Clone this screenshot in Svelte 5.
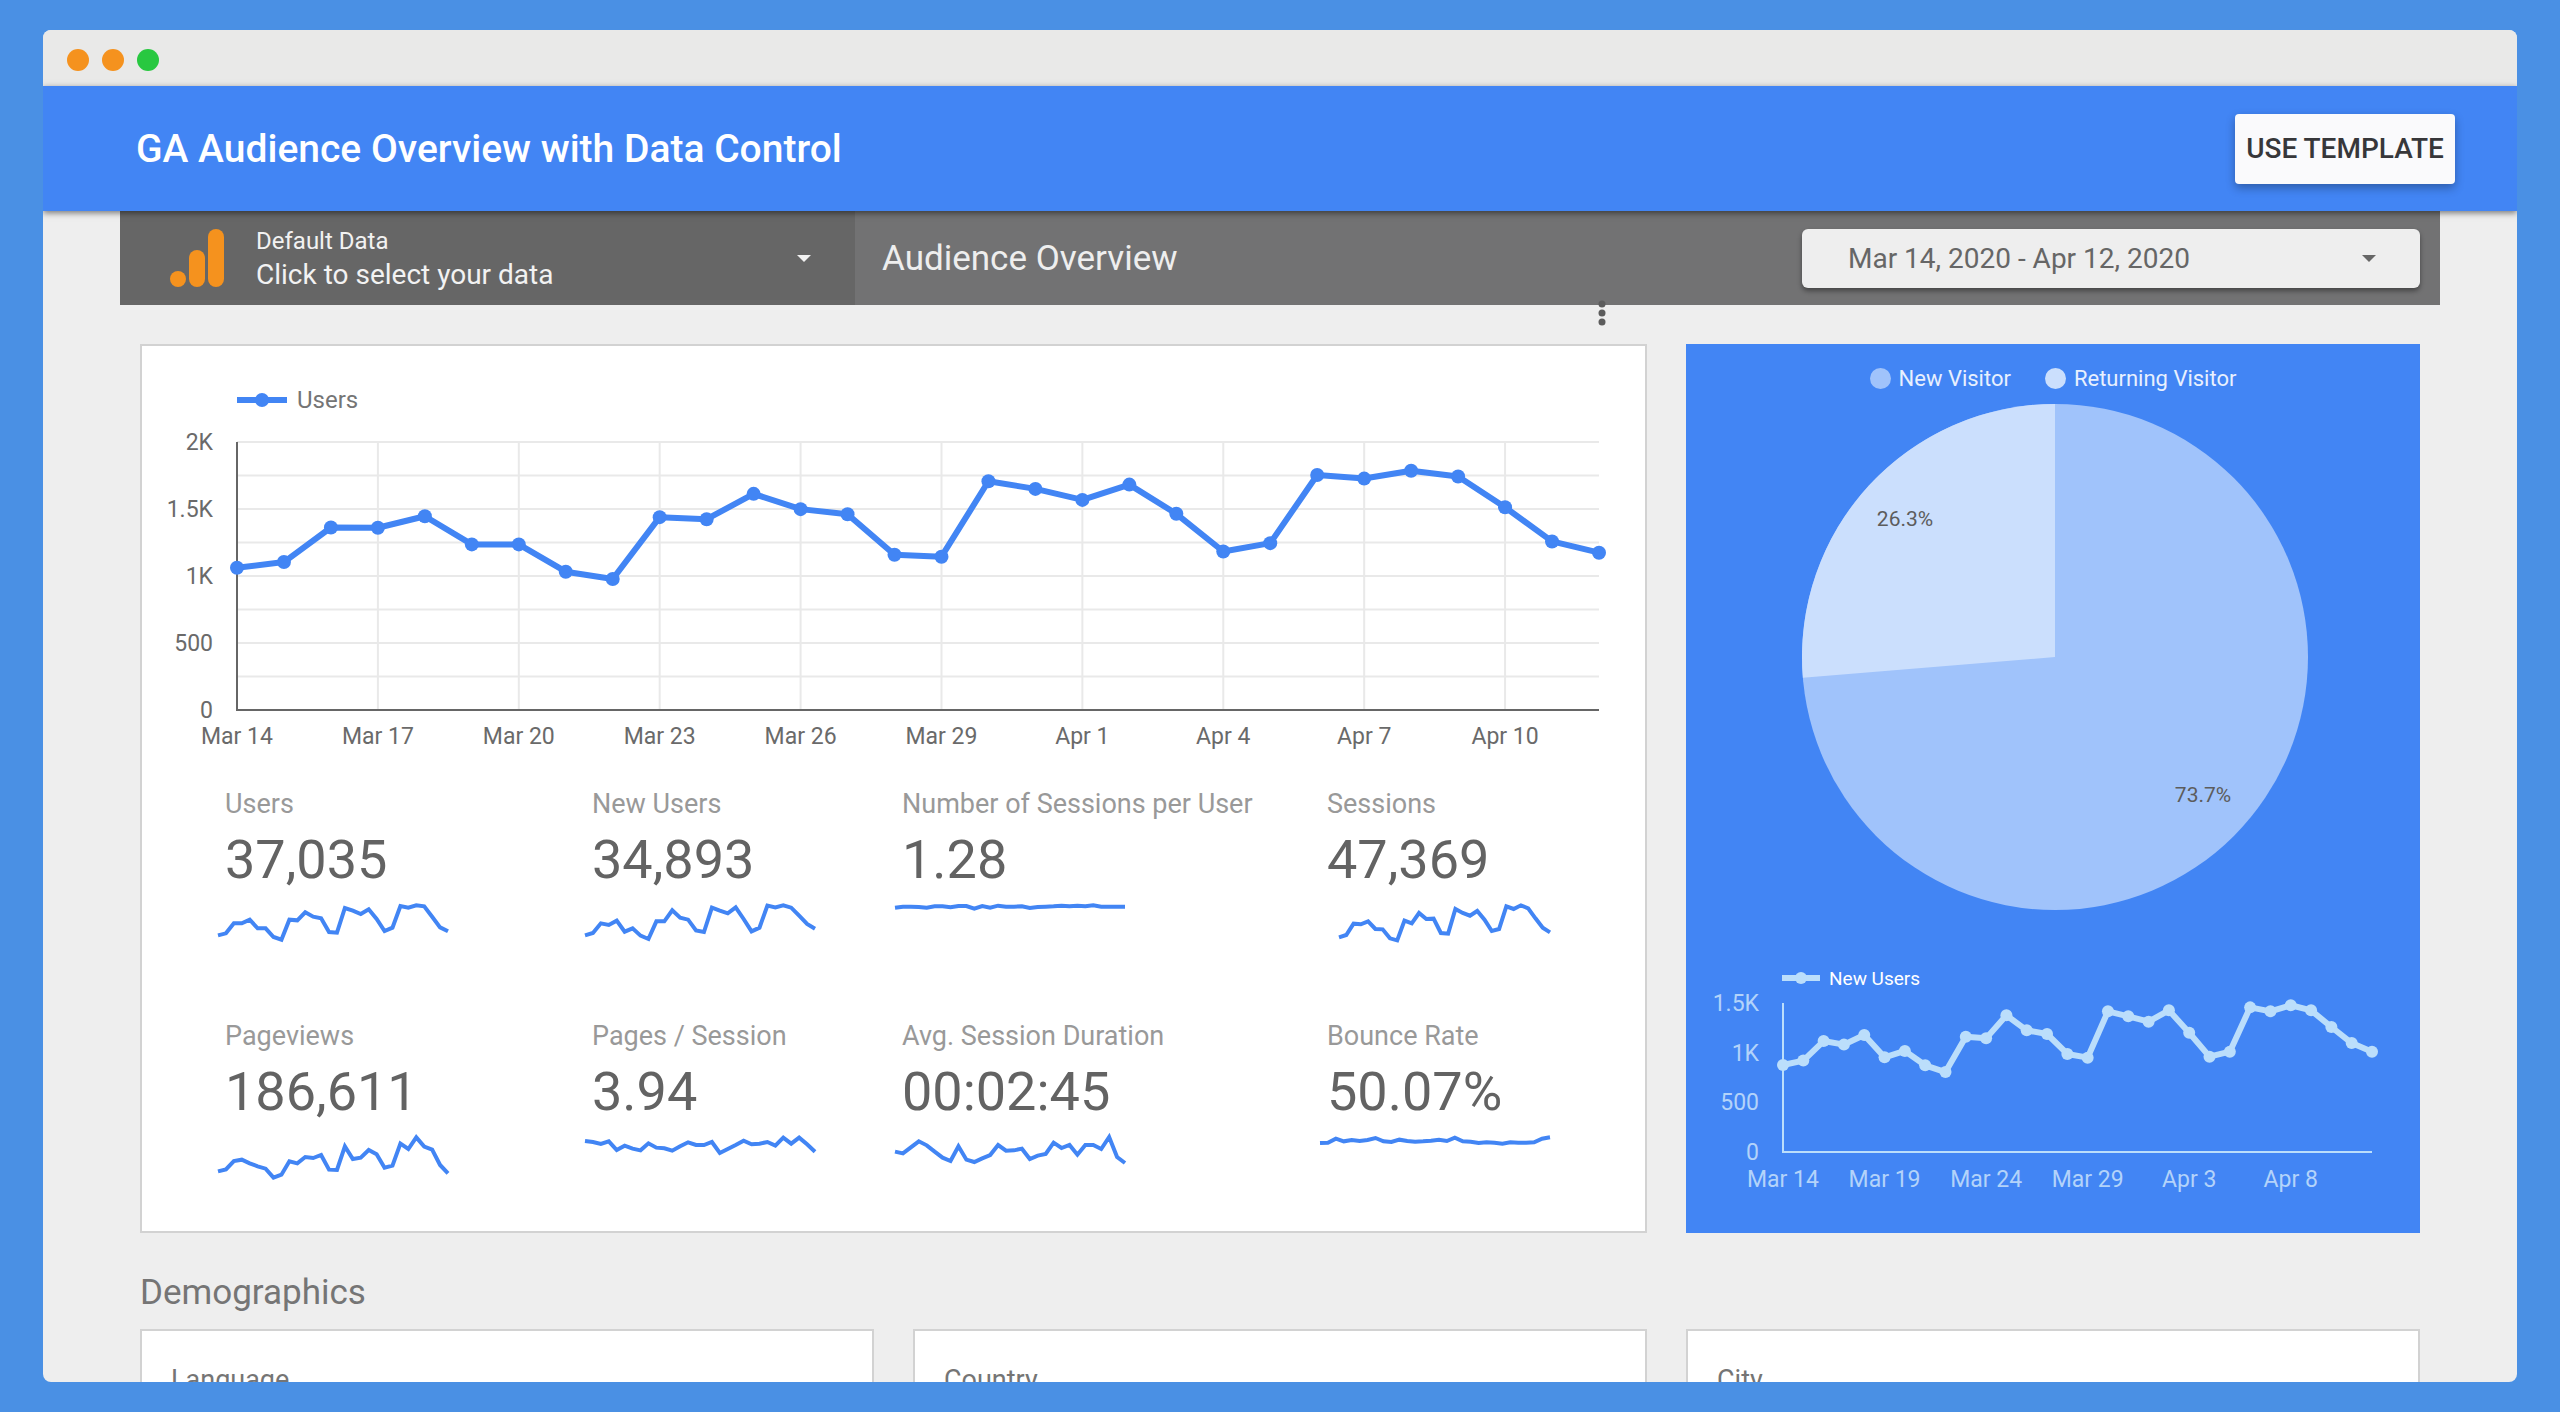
<script>
	const users = [1062, 1104, 1362, 1360, 1446, 1236, 1236, 1032, 978, 1439, 1424, 1613, 1499, 1461, 1159, 1144, 1707, 1650, 1568, 1682, 1464, 1183, 1245, 1754, 1727, 1786, 1742, 1513, 1258, 1174];
	const newUsers = [876, 920, 1117, 1081, 1178, 953, 1017, 873, 805, 1161, 1144, 1376, 1225, 1188, 987, 950, 1416, 1366, 1312, 1426, 1201, 960, 1010, 1456, 1416, 1477, 1426, 1258, 1097, 1010];

	// trend values are depths below the top of the sparkline, in thirds of a unit
	const metrics = [
		{ label: 'Users', value: '37,035', trend: [97, 91, 61, 61, 50, 76, 76, 102, 110, 50, 52, 28, 41, 46, 87, 89, 15, 23, 33, 19, 48, 84, 74, 9, 14, 7, 10, 41, 73, 85] },
		{ label: 'New Users', value: '34,893', trend: [97, 90, 61, 66, 53, 86, 76, 98, 108, 55, 55, 22, 44, 50, 82, 87, 14, 23, 31, 13, 48, 85, 74, 8, 13, 7, 14, 38, 63, 77] },
		{ label: 'Number of Sessions per User', value: '1.28', trend: [14, 11, 11, 12, 14, 10, 10, 13, 9, 9, 17, 9, 14, 8, 11, 11, 10, 15, 12, 11, 10, 8, 10, 8, 10, 7, 11, 11, 11, 11] },
		{ label: 'Sessions', value: '47,369', start: 19, trend: [103, 96, 62, 64, 55, 78, 79, 106, 112, 53, 61, 30, 48, 47, 90, 92, 18, 30, 38, 24, 50, 84, 78, 10, 18, 7, 16, 46, 74, 88] },
		{ label: 'Pageviews', value: '186,611', trend: [109, 103, 78, 74, 85, 94, 101, 128, 119, 79, 85, 66, 69, 60, 104, 105, 34, 72, 68, 45, 58, 98, 92, 26, 42, 7, 35, 44, 90, 115] },
		{ label: 'Pages / Session', value: '3.94', trend: [18, 21, 27, 19, 45, 32, 41, 46, 25, 38, 40, 47, 34, 22, 30, 30, 21, 54, 42, 30, 17, 28, 26, 21, 32, 8, 26, 8, 28, 50] },
		{ label: 'Avg. Session Duration', value: '00:02:45', trend: [50, 55, 37, 19, 31, 50, 68, 78, 34, 74, 81, 70, 60, 30, 47, 46, 41, 72, 62, 57, 23, 39, 30, 59, 30, 30, 42, 6, 66, 84] },
		{ label: 'Bounce Rate', value: '50.07%', trend: [24, 23, 11, 19, 15, 18, 15, 9, 19, 21, 14, 18, 20, 19, 17, 14, 18, 8, 19, 20, 24, 22, 23, 26, 22, 23, 23, 22, 11, 7] }
	];

	const tables = ['Language', 'Country', 'City'];

	const main = { left: 95, right: 1457, top: 28, bottom: 296, max: 2000 };
	const side = { left: 97, right: 686, top: 13, bottom: 162, max: 1500 };

	const mainY = [[2000, '2K'], [1500, '1.5K'], [1000, '1K'], [500, '500'], [0, '0']];
	const mainX = ['Mar 14', 'Mar 17', 'Mar 20', 'Mar 23', 'Mar 26', 'Mar 29', 'Apr 1', 'Apr 4', 'Apr 7', 'Apr 10'];
	const sideY = [[1500, '1.5K'], [1000, '1K'], [500, '500'], [0, '0']];
	const sideX = ['Mar 14', 'Mar 19', 'Mar 24', 'Mar 29', 'Apr 3', 'Apr 8'];
	const gridRows = [250, 500, 750, 1000, 1250, 1500, 1750, 2000];

	const px = (c, i) => c.left + (i * (c.right - c.left)) / 29;
	const py = (c, v) => c.bottom - (v * (c.bottom - c.top)) / c.max;
	const line = (c, data) => data.map((v, i) => `${px(c, i)},${py(c, v)}`).join(' ');
	const spark = (m) => {
		const start = m.start || 0;
		return m.trend.map((v, i) => `${start + (i * (230 - start)) / 29},${v / 3}`).join(' ');
	};

	// pie: the returning slice runs anticlockwise from twelve o'clock
	const angle = 0.263 * 2 * Math.PI;
	const sliceX = 369 - 253 * Math.sin(angle);
	const sliceY = 253 - 253 * Math.cos(angle);
</script>

<div class="window">
	<div class="titlebar">
		<span class="dot"></span>
		<span class="dot"></span>
		<span class="dot green"></span>
	</div>

	<header>
		<h1>GA Audience Overview with Data Control</h1>
		<button class="use">USE TEMPLATE</button>
	</header>

	<main>
		<div class="toolbar">
			<button class="source">
				<svg class="logo" width="54" height="58" viewBox="0 0 54 58" aria-hidden="true">
					<circle cx="8" cy="50" r="8" />
					<rect x="19" y="21" width="16" height="37" rx="8" />
					<rect x="38" y="0" width="16" height="58" rx="8" />
				</svg>
				<span class="source-text">
					<span class="small">Default Data</span>
					<span>Click to select your data</span>
				</span>
				<svg class="caret" width="14" height="7" viewBox="0 0 14 7" aria-hidden="true"><path d="M0 0h14l-7 7z" /></svg>
			</button>
			<div class="page-bar">
				<h2>Audience Overview</h2>
				<button class="date">
					<span>Mar 14, 2020 - Apr 12, 2020</span>
					<svg class="caret" width="14" height="7" viewBox="0 0 14 7" aria-hidden="true"><path d="M0 0h14l-7 7z" /></svg>
				</button>
			</div>
			<button class="more" aria-label="More options">
				<svg width="8" height="26" viewBox="0 0 8 26">
					<circle cx="4" cy="4" r="3.5" />
					<circle cx="4" cy="13" r="3.5" />
					<circle cx="4" cy="22" r="3.5" />
				</svg>
			</button>
		</div>

		<div class="grid">
			<section class="card overview">
				<div class="legend">
					<svg width="50" height="14" viewBox="0 0 50 14" aria-hidden="true">
						<path d="M0 7h50" /><circle cx="25" cy="7" r="7" />
					</svg>
					Users
				</div>
				<svg class="chart" viewBox="0 0 1503 340">
					{#each gridRows as v}
						<line class="gridline" x1={main.left} x2={main.right} y1={py(main, v)} y2={py(main, v)} />
					{/each}
					{#each mainX as label, i}
						{#if i > 0}
							<line class="gridline" x1={px(main, i * 3)} x2={px(main, i * 3)} y1={main.top} y2={main.bottom} />
						{/if}
						<text x={px(main, i * 3)} y="330" text-anchor="middle">{label}</text>
					{/each}
					{#each mainY as [v, label]}
						<text x="71" y={py(main, v) + 8} text-anchor="end">{label}</text>
					{/each}
					<path class="axis" d="M{main.left} {main.top}V{main.bottom}H{main.right}" />
					<polyline class="series" points={line(main, users)} />
					{#each users as v, i}
						<circle cx={px(main, i)} cy={py(main, v)} r="7" />
					{/each}
				</svg>

				<div class="metrics">
					{#each metrics as m}
						<div class="metric">
							<div class="label">{m.label}</div>
							<div class="value">{m.value}</div>
							<svg class="spark" width="230" height="44" viewBox="0 0 230 44">
								<polyline points={spark(m)} />
							</svg>
						</div>
					{/each}
				</div>
			</section>

			<section class="visitors">
				<div class="pie-legend">
					<span class="key"><i></i>New Visitor</span>
					<span class="key returning"><i></i>Returning Visitor</span>
				</div>
				<svg class="pie" viewBox="0 0 734 506">
					<circle cx="369" cy="253" r="253" />
					<path d="M369 253V0A253 253 0 0 0 {sliceX} {sliceY}Z" />
					<text x="219" y="122" text-anchor="middle">26.3%</text>
					<text x="517" y="398" text-anchor="middle">73.7%</text>
				</svg>
				<div class="legend">
					<svg width="38" height="12" viewBox="0 0 38 12" aria-hidden="true">
						<path d="M0 6h38" /><circle cx="19" cy="6" r="6" />
					</svg>
					New Users
				</div>
				<svg class="chart" viewBox="0 0 734 215">
					{#each sideX as label, i}
						<text x={px(side, i * 5)} y="197" text-anchor="middle">{label}</text>
					{/each}
					{#each sideY as [v, label]}
						<text x="73" y={py(side, v) + 8} text-anchor="end">{label}</text>
					{/each}
					<path class="axis" d="M{side.left} {side.top}V{side.bottom}H{side.right}" />
					<polyline class="series" points={line(side, newUsers)} />
					{#each newUsers as v, i}
						<circle cx={px(side, i)} cy={py(side, v)} r="6" />
					{/each}
				</svg>
			</section>
		</div>

		<h2 class="section-title">Demographics</h2>
		<div class="grid">
			{#each tables as name}
				<section class="card table-card">
					<h3>{name}</h3>
				</section>
			{/each}
		</div>
	</main>
</div>

<style>
:global(body) {
	background: #4a90e4;
	font-family: Roboto, "Liberation Sans", sans-serif;
}

h1, h2, h3 {
	margin: 0;
	font-weight: 400;
}

button {
	border: 0;
	padding: 0;
	font-family: inherit;
	cursor: pointer;
}

.window {
	height: calc(100vh - 60px);
	margin: 30px 43px;
	border-radius: 8px;
	overflow: hidden;
	background: #eee;
}

.titlebar {
	display: flex;
	align-items: center;
	gap: 13px;
	box-sizing: border-box;
	height: 56px;
	padding: 3px 0 0 24px;
	background: #e9e9e8;
}

.dot {
	width: 22px;
	height: 22px;
	border-radius: 50%;
	background: #f5921e;
}

.dot.green {
	background: #28c840;
}

header {
	position: relative;
	z-index: 1;
	display: flex;
	align-items: center;
	justify-content: space-between;
	height: 125px;
	padding: 0 62px 0 93px;
	background: #4285f4;
	box-shadow: 0 2px 6px rgba(0, 0, 0, .5);
}

h1 {
	font-size: 39px;
	font-weight: 500;
	color: #fff;
}

.use {
	width: 220px;
	height: 70px;
	border-radius: 4px;
	background: #fafafc;
	color: #37373a;
	font-size: 28px;
	font-weight: 500;
	white-space: nowrap;
	box-shadow: 0 4px 10px rgba(0, 0, 0, .3);
}

main {
	padding: 0 97px;
}

.toolbar {
	position: relative;
	display: grid;
	grid-template-columns: 735fr 1585fr;
	height: 94px;
	margin: 0 -20px 39px;
}

.source {
	display: flex;
	align-items: center;
	padding: 0 44px 0 50px;
	background: #666;
	color: #f2f2f2;
	font-size: 28px;
	text-align: left;
}

.logo {
	fill: #f5921e;
}

.source-text {
	display: flex;
	flex: 1;
	flex-direction: column;
	padding-left: 32px;
	line-height: 34px;
}

.small {
	font-size: 24px;
}

.caret {
	fill: currentColor;
}

.page-bar {
	display: flex;
	align-items: center;
	justify-content: space-between;
	padding: 0 20px 0 27px;
	background: #727273;
}

.page-bar h2 {
	font-size: 35px;
	color: #eee;
}

.date {
	display: flex;
	align-items: center;
	justify-content: space-between;
	box-sizing: border-box;
	width: 618px;
	height: 59px;
	padding: 0 44px 0 46px;
	border-radius: 6px;
	background: #eee;
	color: #666;
	font-size: 28px;
	box-shadow: 0 3px 5px rgba(0, 0, 0, .4);
}

.more {
	position: absolute;
	top: 89px;
	left: 1478px;
	height: 26px;
	background: none;
}

.more svg {
	display: block;
	fill: #5c5c5c;
}

.grid {
	display: grid;
	grid-template-columns: repeat(3, minmax(0, 1fr));
	gap: 39px;
}

.card {
	border: 2px solid #d2d2d2;
	background: #fff;
}

.overview {
	grid-column: span 2;
	padding: 40px 0 52px;
}

.legend {
	display: flex;
	align-items: center;
	gap: 10px;
	height: 28px;
	padding-left: 95px;
	font-size: 24px;
	color: #757575;
}

.legend path {
	stroke: #4285f4;
	stroke-width: 6;
}

.legend circle {
	fill: #4285f4;
}

.chart {
	display: block;
	width: 100%;
}

.chart text {
	font-size: 23px;
	fill: #6a6a6a;
}

.gridline {
	stroke: #e9e9e9;
	stroke-width: 2;
}

.axis {
	fill: none;
	stroke: #666;
	stroke-width: 2;
}

.series {
	fill: none;
	stroke: #4285f4;
	stroke-width: 6;
	stroke-linejoin: round;
}

.chart circle {
	fill: #4285f4;
}

.metrics {
	display: grid;
	grid-template-columns: 367fr 310fr 425fr 230fr;
	row-gap: 73px;
	padding: 34px 95px 0 76px;
}

.label {
	padding-left: 7px;
	font-size: 27px;
	line-height: 32px;
	color: #999;
	white-space: nowrap;
}

.value {
	padding: 8px 0 11px 7px;
	font-size: 54px;
	line-height: 64px;
	color: #636363;
}

.spark {
	display: block;
	overflow: visible;
}

.spark polyline {
	fill: none;
	stroke: #4285f4;
	stroke-width: 4;
}

.visitors {
	padding: 20px 0 28px;
	background: #4285f4;
}

.pie-legend {
	display: flex;
	justify-content: center;
	gap: 34px;
	height: 28px;
	font-size: 22px;
	color: #e8f0fe;
}

.key {
	display: flex;
	align-items: center;
	gap: 8px;
}

.key i {
	width: 21px;
	height: 21px;
	border-radius: 50%;
	background: #a0c3fb;
}

.key.returning i {
	background: #cbdffd;
}

.pie {
	display: block;
	width: 100%;
	margin: 12px 0 56px;
}

.pie circle {
	fill: #a0c3fb;
}

.pie path {
	fill: #cbdffd;
}

.pie text {
	font-size: 21px;
	fill: #5c5c5c;
}

.visitors .legend {
	gap: 9px;
	height: 24px;
	padding-left: 96px;
	font-size: 19px;
	color: #fff;
}

.visitors .legend path {
	stroke: #bbdefb;
}

.visitors .legend circle,
.visitors .chart circle {
	fill: #bbdefb;
}

.visitors .chart text {
	fill: #b3d3fa;
}

.visitors .axis {
	stroke: #bbdefb;
}

.visitors .series {
	stroke: #bbdefb;
}

.section-title {
	padding: 40px 0 16px;
	font-size: 35px;
	line-height: 40px;
	color: #757575;
}

.table-card {
	min-height: 320px;
	padding: 33px 29px;
}

h3 {
	font-size: 27px;
	line-height: 32px;
	color: #757575;
}
</style>
